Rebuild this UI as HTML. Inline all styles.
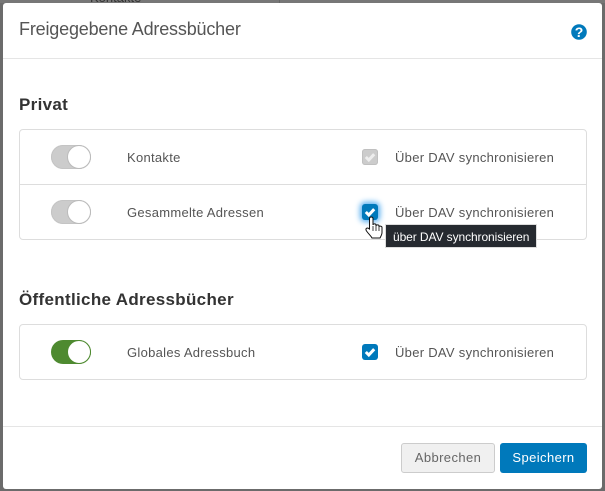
<!DOCTYPE html>
<html lang="de"><head><meta charset="utf-8"><style>
html,body{margin:0;padding:0}
body{width:605px;height:491px;overflow:hidden;background:#6b6b6b;position:relative;font-family:"Liberation Sans",sans-serif;color:#555}
.a{position:absolute;white-space:nowrap}
#m{left:3px;top:3px;width:599px;height:486px;background:#fff;border-radius:3px}
.hr{height:1px;background:#e5e5e5;left:3px;width:599px}
.box{left:19px;width:566px;border:1px solid #ddd;border-radius:4px}
.h{font-weight:bold;font-size:17px;color:#333;left:19px;letter-spacing:.32px}
.t{font-size:13px;letter-spacing:.29px;color:#555}
.sw{left:51px;width:40px;height:24px;border-radius:12px;background:#ccc;box-shadow:inset 0 0 0 1px #c4c4c4}
.sw i{position:absolute;right:0;top:0;width:22px;height:22px;border:1px solid #bbb;border-radius:50%;background:#fff}
.cb{left:362px;width:16px;height:16px;border-radius:3px;background:#0079bb}
.cb svg{position:absolute;left:0;top:0}
</style></head><body>
<div class="a" style="left:0;top:0;width:605px;height:3px;background:#777"></div>
<div class="a" style="left:279px;top:0;width:1px;height:3px;background:#666"></div>
<div class="a" style="left:90px;top:-10px;font-size:13px;color:#333">Kontakte</div>
<div class="a" id="m"></div>
<div class="a" style="left:19px;top:19px;font-size:18px;letter-spacing:-.18px;color:#555">Freigegebene Adressbücher</div>
<svg class="a" style="left:571px;top:24px" width="16" height="16" viewBox="0 0 16 16"><circle cx="8" cy="8" r="7.8" fill="#0079bb"/><text x="8" y="13" font-size="14" font-weight="bold" text-anchor="middle" fill="#fff" font-family="Liberation Sans">?</text></svg>
<div class="a hr" style="top:58px"></div>
<div class="a h" style="top:95px">Privat</div>
<div class="a box" style="top:129px;height:109px"></div>
<div class="a" style="left:20px;top:184px;width:566px;height:1px;background:#ddd"></div>
<div class="a sw" style="top:145px"><i></i></div>
<div class="a t" style="left:127px;top:150px">Kontakte</div>
<div class="a cb" style="top:149px;background:#ccc;box-shadow:inset 0 0 0 1px #c0c0c0"><svg width="16" height="16"><path d="M3.800 8l3 3 5.400-5.800" fill="none" stroke="#eee" stroke-width="3"/></svg></div>
<div class="a t" style="left:395px;top:150px">Über DAV synchronisieren</div>
<div class="a sw" style="top:200px"><i></i></div>
<div class="a t" style="left:127px;top:205px">Gesammelte Adressen</div>
<div class="a cb" style="top:204px;box-shadow:0 0 6px 2px #56aef0"><svg width="16" height="16"><path d="M3.800 8l3 3 5.400-5.800" fill="none" stroke="#fff" stroke-width="3"/></svg></div>
<div class="a t" style="left:395px;top:205px">Über DAV synchronisieren</div>
<div class="a" style="left:385px;top:224px;width:152px;height:24px;background:#262a30;box-shadow:0 0 0 1px #ddd inset;"></div>
<div class="a" style="left:393px;top:230px;font-size:12px;color:#fff;letter-spacing:-.09px">über DAV synchronisieren</div>
<svg class="a" style="left:365px;top:216px" width="20" height="24" viewBox="0 0 20 24"><path d="M4.500 2.500c0-2 3.500-2 3.500 0V9c0-1.500 3-1.500 3 0v1c0-1.500 3-1.500 3 0v1c0-1.500 3-1 3 .5v5c0 2-1 3.500-2 5.500H7c-1-2-3-3.500-5.500-7-1.500-2.500.5-4 3-2V2.500z" fill="#fff" stroke="#111" stroke-width="1"/><path d="M8 10v5M11 10v5M14 11v4" stroke="#111" stroke-width=".8"/></svg>
<div class="a h" style="top:290px">Öffentliche Adressbücher</div>
<div class="a box" style="top:324px;height:54px"></div>
<div class="a sw" style="top:340px;background:#4e8a30;box-shadow:none"><i style="border-color:#4e8a30"></i></div>
<div class="a t" style="left:127px;top:345px">Globales Adressbuch</div>
<div class="a cb" style="top:344px"><svg width="16" height="16"><path d="M3.800 8l3 3 5.400-5.800" fill="none" stroke="#fff" stroke-width="3"/></svg></div>
<div class="a t" style="left:395px;top:345px">Über DAV synchronisieren</div>
<div class="a hr" style="top:426px"></div>
<div class="a" style="left:401px;top:443px;width:92px;height:28px;border:1px solid #ccc;border-radius:3px;background:#f0f0f0;text-align:center;line-height:28px;font-size:13px;letter-spacing:.4px;color:#666">Abbrechen</div>
<div class="a" style="left:500px;top:443px;width:87px;height:30px;border-radius:3px;background:#0079bb;text-align:center;line-height:30px;font-size:13px;letter-spacing:.4px;color:#fff">Speichern</div>
</body></html>
